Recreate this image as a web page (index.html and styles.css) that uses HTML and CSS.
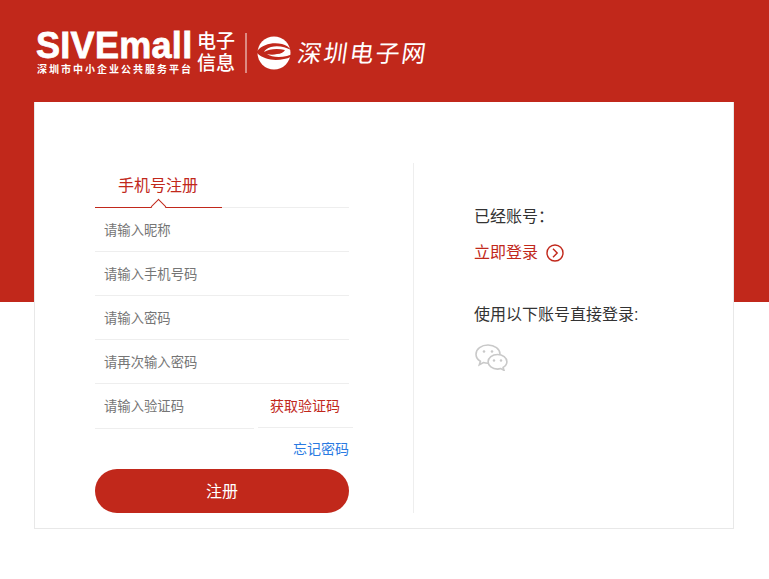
FILE: index.html
```html
<!DOCTYPE html>
<html lang="zh-CN">
<head>
  <meta charset="UTF-8">
  <meta name="viewport" content="width=device-width, initial-scale=1.0">
  <title>手机号注册</title>
  <link rel="stylesheet" href="styles.css">
</head>
<body>
  <header class="header">
    <div class="brand">
      <div class="brand-main">
        <div class="brand-name">SIVEmall</div>
        <div class="brand-sub">深圳市中小企业公共服务平台</div>
      </div>
      <div class="brand-side">电子<br>信息</div>
    </div>
    <div class="brand-line"></div>
    <svg class="globe" width="34" height="34" viewBox="0 0 34 34">
      <circle cx="17" cy="17" r="16.5" fill="#fff"/>
      <path d="M0 15C6 8 16 6 25 8c4 1 7 3 9 6-6-3-13-5-20-3-4 1-6 3-7 5 5-3 13-4 21-2-1 2-4 4-8 4-3 1-7 1-10 0 4 3 12 4 20 2 4-1 7-2 9-4-2 4-7 6-12 7-9 2-20 1-27-6z" fill="#c1281b"/>
    </svg>
    <div class="site-name">深圳电子网</div>
  </header>

  <main class="card">
    <section class="register">
      <div class="tabs">
        <div class="tab">手机号注册</div>
      </div>
      <form class="reg-form">
        <input class="field" type="text" placeholder="请输入昵称">
        <input class="field" type="text" placeholder="请输入手机号码">
        <input class="field" type="password" placeholder="请输入密码">
        <input class="field" type="password" placeholder="请再次输入密码">
        <div class="code-row">
          <input class="field code-input" type="text" placeholder="请输入验证码">
          <a class="code-btn">获取验证码</a>
        </div>
        <div class="forget-row"><a class="forget">忘记密码</a></div>
        <button class="submit-btn" type="button">注册</button>
      </form>
    </section>

    <section class="aside">
      <p class="aside-title">已经账号：</p>
      <a class="login-link">
        立即登录
        <svg width="18" height="18" viewBox="0 0 18 18" fill="none" stroke="#c1281b" stroke-width="1.4">
          <circle cx="9" cy="9" r="8"/>
          <path d="M7 4.800 11.200 9 7 13.200"/>
        </svg>
      </a>
      <p class="aside-title other">使用以下账号直接登录:</p>
      <svg class="wechat" width="33" height="27" viewBox="0 0 33 27" fill="#fff" stroke="#c9c9c9" stroke-width="1.6">
        <path d="M13 1C6.400 1 1 5 1 10.200c0 3 1.700 5.400 4.400 7.100L4.300 20.800l4.100-2.200c1.500.4 3 .6 4.600.6 6.600 0 12-4 12-9S19.600 1 13 1z"/>
        <path d="M22.500 10.500c-5.200 0-9.400 3.300-9.400 7.300s4.200 7.300 9.400 7.300c1.100 0 2.200-.2 3.200-.5l3.300 1.700-.9-2.900c2.300-1.300 3.800-3.300 3.800-5.600 0-4-4.200-7.300-9.400-7.300z"/>
        <circle cx="9" cy="7.500" r="1.300" fill="#c9c9c9" stroke="none"/>
        <circle cx="17" cy="7.500" r="1.300" fill="#c9c9c9" stroke="none"/>
        <circle cx="19" cy="16.500" r="1.200" fill="#c9c9c9" stroke="none"/>
        <circle cx="26" cy="16.500" r="1.200" fill="#c9c9c9" stroke="none"/>
      </svg>
    </section>
  </main>
</body>
</html>
```

FILE: styles.css
```css
* {
  margin: 0;
  padding: 0;
  box-sizing: border-box;
}

html, body {
  height: 579px;
  overflow: hidden;
}

body {
  font-family: "Liberation Sans", "Noto Sans CJK SC", sans-serif;
  background: linear-gradient(#c1281b 302px, #fff 302px);
  color: #333;
}

/* Header */
.header {
  display: flex;
  align-items: center;
  height: 102px;
  padding: 4px 0 0 36px;
  color: #fff;
}

.brand {
  display: flex;
  flex: none;
  align-items: flex-start;
  width: 198px;
}

.brand-main {
  flex: none;
  width: 161px;
}

.brand-name {
  font-size: 36px;
  font-weight: bold;
  line-height: 30px;
  letter-spacing: 0.3px;
  -webkit-text-stroke: 0.8px #fff;
}

.brand-sub {
  margin-top: 3px;
  padding-left: 1px;
  font-size: 10px;
  font-weight: bold;
  line-height: 12px;
  letter-spacing: 2px;
  white-space: nowrap;
}

.brand-side {
  flex: none;
  font-size: 19px;
  font-weight: 500;
  line-height: 22px;
  white-space: nowrap;
}

.brand-line {
  width: 2px;
  height: 40px;
  margin: -1px 11px 0;
  background: #dd8a82;
}

.site-name {
  margin: -4px 0 0 7px;
  font-size: 24px;
  letter-spacing: 2px;
  white-space: nowrap;
  transform: skewX(-8deg);
}

.globe {
  margin-left: -1px;
}

/* Card */
.card {
  display: flex;
  width: 700px;
  height: 427px;
  margin-left: 34px;
  padding: 61px 0 15px 60px;
  background: #fff;
  border: 1px solid #e8e8e8;
  border-top: 0;
}

.register {
  width: 254px;
}

.tabs {
  height: 45px;
  border-bottom: 1px solid #eee;
}

.tab {
  position: relative;
  width: 127px;
  height: 45px;
  padding: 1px 0 0 23px;
  font-size: 16px;
  line-height: 44px;
  color: #c1281b;
  border-bottom: 1px solid #c1281b;
}

/* Chevron on the tab underline */
.tab::after {
  content: "";
  position: absolute;
  left: 58px;
  bottom: -5px;
  width: 10px;
  height: 10px;
  background: #fff;
  border-top: 1px solid #c1281b;
  border-left: 1px solid #c1281b;
  transform: rotate(45deg);
}

.field {
  display: block;
  width: 100%;
  height: 44px;
  padding: 2px 0 0 9px;
  font-family: inherit;
  font-size: 13.33px;
  color: #333;
  background: #fff;
  border: 0;
  border-bottom: 1px solid #eee;
  outline: none;
}

.field::placeholder {
  color: #757575;
}

.code-row {
  display: flex;
  height: 45px;
}

.code-input {
  width: 159px;
  height: 45px;
  padding-top: 0;
}

.code-btn {
  width: 95px;
  margin: 0 -4px 0 4px;
  flex: none;
  height: 44px;
  padding-left: 12px;
  font-size: 14px;
  line-height: 44px;
  color: #c1281b;
  border-bottom: 1px solid #eee;
}

.forget-row {
  display: flex;
  justify-content: flex-end;
  height: 40px;
  padding-top: 10px;
}

.forget {
  font-size: 14px;
  line-height: 20px;
  color: #2a7ae2;
}

.submit-btn {
  display: block;
  width: 100%;
  height: 44px;
  padding-bottom: 3px;
  font-family: inherit;
  font-size: 16px;
  color: #fff;
  background: #c1281b;
  border: 0;
  border-radius: 22px;
}

/* Right column */
.aside {
  width: 321px;
  height: 350px;
  margin-left: 64px;
  padding: 42px 0 0 60px;
  border-left: 1px solid #eee;
}

.aside-title {
  font-size: 16px;
  line-height: 24px;
  color: #333;
}

.other {
  margin-top: 38px;
}

.login-link {
  display: flex;
  align-items: center;
  gap: 8px;
  margin-top: 12px;
  font-size: 16px;
  line-height: 24px;
  color: #c1281b;
}

.wechat {
  display: block;
  margin-top: 17px;
  margin-left: 1px;
}
```
